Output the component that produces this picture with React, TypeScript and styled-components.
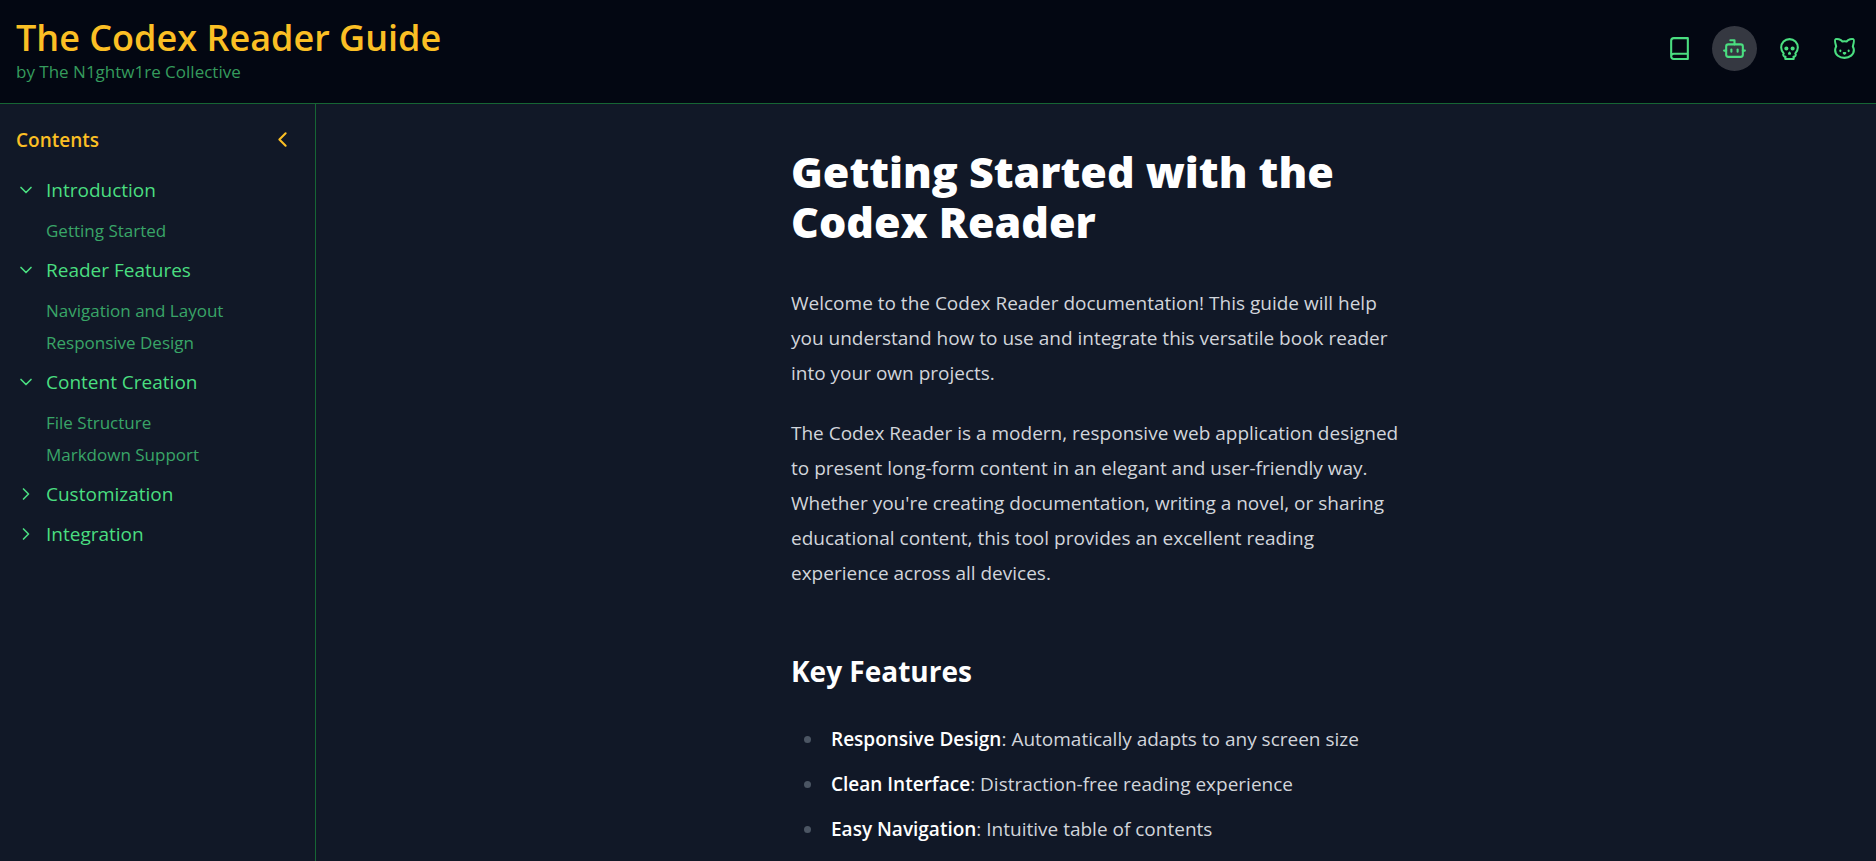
import React, { useState } from "react";
import styled, { createGlobalStyle } from "styled-components";
import { Bot, Cat, ChevronDown, ChevronLeft, ChevronRight } from "lucide-react";

const color = {
  header: "#030712",
  page: "#111827",
  line: "#166534",
  accent: "#fbbf24",
  green: "#4ade80",
  greenDim: "#39a567",
  greenSub: "#359b5d",
  body: "#d1d5db",
  bullet: "#4b5563",
};

const GlobalStyle = createGlobalStyle`
  *, *::before, *::after { box-sizing: border-box; }
  body {
    margin: 0;
    background: ${color.page};
    color: ${color.body};
    font-family: "Segoe UI", "Open Sans", "Noto Sans", sans-serif;
    font-size: 19px;
  }
`;

const Page = styled.div`
  min-height: 100vh;
  display: flex;
  flex-direction: column;
`;

const Header = styled.header`
  display: flex;
  align-items: center;
  justify-content: space-between;
  padding: 15px 9px 19px 16px;
  background: ${color.header};
  border-bottom: 1px solid ${color.line};
`;

const Title = styled.h1`
  margin: 0;
  font-size: 36px;
  line-height: 45px;
  font-weight: 600;
  color: ${color.accent};
`;

const Byline = styled.p`
  margin: 0;
  font-size: 17px;
  line-height: 24px;
  color: ${color.greenSub};
`;

const Themes = styled.div`
  display: flex;
  gap: 10px;
  margin-bottom: 2px;
`;

const IconButton = styled.button<{ $active?: boolean; $tone?: string }>`
  display: flex;
  align-items: center;
  justify-content: center;
  width: 45px;
  height: 45px;
  padding: 0;
  border: 0;
  border-radius: 50%;
  background: ${(p) => (p.$active ? "#353841" : "transparent")};
  color: ${(p) => p.$tone ?? color.green};
  cursor: pointer;
`;

const Body = styled.div`
  flex: 1;
  display: flex;
`;

const Sidebar = styled.nav`
  flex: 0 0 316px;
  padding: 13px 10px 16px 16px;
  border-right: 1px solid ${color.line};
`;

const SidebarHead = styled.div`
  display: flex;
  align-items: center;
  justify-content: space-between;
  margin-bottom: 8px;
`;

const SidebarTitle = styled.h2`
  margin: 0;
  font-size: 19px;
  line-height: 28px;
  font-weight: 600;
  color: ${color.accent};
`;

const SectionButton = styled.button`
  display: flex;
  align-items: center;
  gap: 10px;
  width: 100%;
  height: 40px;
  padding: 0;
  border: 0;
  background: none;
  color: ${color.green};
  font: inherit;
  font-size: 19px;
  text-align: left;
  cursor: pointer;
`;

const Chapters = styled.ul`
  list-style: none;
  margin: 0;
  padding: 5px 0 3px 30px;
`;

const ChapterLink = styled.a`
  display: block;
  font-size: 17px;
  line-height: 32px;
  color: ${color.greenDim};
  text-decoration: none;
`;

const Main = styled.main`
  flex: 1;
  min-width: 0;
  padding: 43px 32px 0;
`;

const Article = styled.article`
  max-width: 610px;
  margin: 0 auto;
`;

const ArticleTitle = styled.h1`
  margin: 0 0 39px;
  font-size: 43px;
  line-height: 50px;
  font-weight: 800;
  color: #fff;
`;

const Paragraph = styled.p`
  margin: 0 0 25px;
  font-size: 19px;
  line-height: 35px;
`;

const Heading = styled.h2`
  margin: 60px 0 31px;
  font-size: 28px;
  line-height: 40px;
  font-weight: 700;
  color: #fff;
`;

const Features = styled.ul`
  list-style: none;
  margin: 0;
  padding: 0;
`;

const Feature = styled.li`
  display: flex;
  align-items: center;
  gap: 20px;
  margin-bottom: 10px;
  padding-left: 13px;
  font-size: 19px;
  line-height: 35px;

  &::before {
    content: "";
    width: 7px;
    height: 7px;
    border-radius: 50%;
    background: ${color.bullet};
  }

  strong {
    font-weight: 600;
    color: #fff;
  }
`;

const Glyph = styled.svg`
  fill: none;
  stroke: currentColor;
  stroke-width: 2;
  stroke-linecap: round;
  stroke-linejoin: round;
`;

function BookIcon({ size }: { size: number }) {
  return (
    <Glyph width={size} height={size} viewBox="0 0 24 24">
      <path d="M4 19.5v-15A2.5 2.5 0 0 1 6.5 2H20v20H6.5a2.5 2.5 0 0 1 0-5H20" />
    </Glyph>
  );
}

function SkullIcon({ size }: { size: number }) {
  return (
    <Glyph width={size} height={size} viewBox="0 0 24 24">
      <circle cx="9" cy="12" r="1" />
      <circle cx="15" cy="12" r="1" />
      <path d="M8 20v2h8v-2" />
      <path d="m12.5 17-.5-1-.5 1h1z" />
      <path d="M16 20a2 2 0 0 0 1.56-3.25 8 8 0 1 0-11.12 0A2 2 0 0 0 8 20" />
    </Glyph>
  );
}

const themes = [
  { name: "Classic", Icon: BookIcon },
  { name: "Robot", Icon: Bot },
  { name: "Skull", Icon: SkullIcon },
  { name: "Cat", Icon: Cat },
];

const sections = [
  { title: "Introduction", chapters: ["Getting Started"] },
  { title: "Reader Features", chapters: ["Navigation and Layout", "Responsive Design"] },
  { title: "Content Creation", chapters: ["File Structure", "Markdown Support"] },
  { title: "Customization", chapters: [] },
  { title: "Integration", chapters: [] },
];

const features = [
  ["Responsive Design", "Automatically adapts to any screen size"],
  ["Clean Interface", "Distraction-free reading experience"],
  ["Easy Navigation", "Intuitive table of contents"],
];

function Section({ title, chapters }: { title: string; chapters: string[] }) {
  const [open, setOpen] = useState(chapters.length > 0);
  const Chevron = open ? ChevronDown : ChevronRight;
  return (
    <div>
      <SectionButton aria-expanded={open} onClick={() => setOpen(!open)}>
        <Chevron size={20} />
        {title}
      </SectionButton>
      {open && (
        <Chapters>
          {chapters.map((c) => (
            <li key={c}>
              <ChapterLink href="#">{c}</ChapterLink>
            </li>
          ))}
        </Chapters>
      )}
    </div>
  );
}

export default function App() {
  const [theme, setTheme] = useState("Robot");
  return (
    <Page>
      <GlobalStyle />
      <Header>
        <div>
          <Title>The Codex Reader Guide</Title>
          <Byline>by The N1ghtw1re Collective</Byline>
        </div>
        <Themes>
          {themes.map(({ name, Icon }) => (
            <IconButton key={name} aria-label={name} $active={theme === name} onClick={() => setTheme(name)}>
              <Icon size={25} />
            </IconButton>
          ))}
        </Themes>
      </Header>
      <Body>
        <Sidebar aria-label="Contents">
          <SidebarHead>
            <SidebarTitle>Contents</SidebarTitle>
            <IconButton aria-label="Collapse contents" $tone={color.accent}>
              <ChevronLeft size={25} />
            </IconButton>
          </SidebarHead>
          {sections.map((s) => (
            <Section key={s.title} {...s} />
          ))}
        </Sidebar>
        <Main>
          <Article>
            <ArticleTitle>Getting Started with the Codex Reader</ArticleTitle>
            <Paragraph>
              Welcome to the Codex Reader documentation! This guide will help you understand how to use and
              integrate this versatile book reader into your own projects.
            </Paragraph>
            <Paragraph>
              The Codex Reader is a modern, responsive web application designed to present long-form content in
              an elegant and user-friendly way. Whether you're creating documentation, writing a novel, or
              sharing educational content, this tool provides an excellent reading experience across all
              devices.
            </Paragraph>
            <Heading>Key Features</Heading>
            <Features>
              {features.map(([name, text]) => (
                <Feature key={name}>
                  <span>
                    <strong>{name}</strong>: {text}
                  </span>
                </Feature>
              ))}
            </Features>
          </Article>
        </Main>
      </Body>
    </Page>
  );
}
